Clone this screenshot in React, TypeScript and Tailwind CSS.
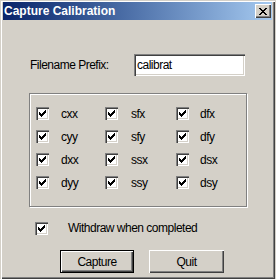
const sunken =
	"shadow-[inset_1px_1px_0_#808080,inset_2px_2px_0_#404040,inset_-1px_-1px_0_#fff,inset_-2px_-2px_0_#d4d0c8]";

function CheckBox() {
	return (
		<span className={`flex h-[13px] w-[13px] shrink-0 items-center justify-center bg-white ${sunken}`}>
			<svg width="7" height="7" viewBox="0 0 7 7" shapeRendering="crispEdges">
				<path
					d="M0 2h1v3H0zM1 3h1v3H1zM2 4h1v3H2zM3 3h1v3H3zM4 2h1v3H4zM5 1h1v3H5zM6 0h1v3H6z"
					fill="#000"
				/>
			</svg>
		</span>
	);
}

const columns = [
	{ gap: "ml-[12px]", items: ["cxx", "cyy", "dxx", "dyy"] },
	{ gap: "ml-[13px]", items: ["sfx", "sfy", "ssx", "ssy"] },
	{ gap: "ml-[11px]", items: ["dfx", "dfy", "dsx", "dsy"] }
];

export default function App() {
	return (
		<div className="h-[279px] w-[276px] bg-[#d4d0c8] font-['Liberation_Sans',Arial,sans-serif] text-[12px] tracking-[-0.5px] text-black">
			<div className="flex h-[279px] w-[275px] flex-col px-[3px] pt-[2px] shadow-[inset_1px_1px_0_#d4d0c8,inset_2px_2px_0_#fff,inset_-1px_-1px_0_#404040,inset_-2px_-2px_0_#808080]">
				{/* title bar */}
				<div className="flex h-[18px] items-center justify-between bg-gradient-to-r from-[#0a246a] to-[#a6caf0] pl-[1px] pr-[1px]">
					<span className="text-[12px] font-bold tracking-normal text-white">Capture Calibration</span>
					<button className="flex h-[14px] w-[16px] items-center justify-center bg-[#d4d0c8] shadow-[inset_1px_1px_0_#fff,inset_-1px_-1px_0_#404040,inset_-2px_-2px_0_#808080]">
						<svg width="8" height="7" viewBox="0 0 8 7" shapeRendering="crispEdges">
							<path
								d="M0 0h2v1H0zM6 0h2v1H6zM1 1h2v1H1zM5 1h2v1H5zM2 2h4v1H2zM3 3h2v1H3zM2 4h4v1H2zM1 5h2v1H1zM5 5h2v1H5zM0 6h2v1H0zM6 6h2v1H6z"
								fill="#000"
							/>
						</svg>
					</button>
				</div>

				{/* filename */}
				<div className="ml-[27px] mt-[34px] flex items-center">
					<span className="w-[104px] shrink-0 whitespace-nowrap">Filename Prefix:</span>
					<div className={`flex h-[22px] w-[111px] items-center bg-white pl-[3px] ${sunken}`}>calibrat</div>
				</div>

				{/* fields */}
				<div className="ml-[26px] mt-[17px] h-[114px] w-[218px] border border-[#808080] pl-[6px] pt-[8px] shadow-[inset_1px_1px_0_#fff,1px_1px_0_#fff]">
					<div className="grid grid-cols-[69px_71px_1fr]">
						{columns.map((col, i) => (
							<div key={i} className="flex flex-col">
								{col.items.map((name) => (
									<div key={name} className="flex h-[23px] items-center">
										<CheckBox />
										<span className={col.gap}>{name}</span>
									</div>
								))}
							</div>
						))}
					</div>
				</div>

				<div className="ml-[32px] mt-[12px] flex items-center">
					<CheckBox />
					<span className="ml-[20px]">Withdraw when completed</span>
				</div>

				<div className="ml-[57px] mt-[13px] flex gap-[15px]">
					<button className="flex h-[23px] w-[74px] items-center justify-center border border-black bg-[#d4d0c8] shadow-[inset_1px_1px_0_#fff,inset_-1px_-1px_0_#404040,inset_-2px_-2px_0_#808080]">
						Capture
					</button>
					<button className="flex h-[23px] w-[75px] items-center justify-center bg-[#d4d0c8] shadow-[inset_1px_1px_0_#fff,inset_-1px_-1px_0_#404040,inset_-2px_-2px_0_#808080]">
						Quit
					</button>
				</div>
			</div>
		</div>
	);
}
